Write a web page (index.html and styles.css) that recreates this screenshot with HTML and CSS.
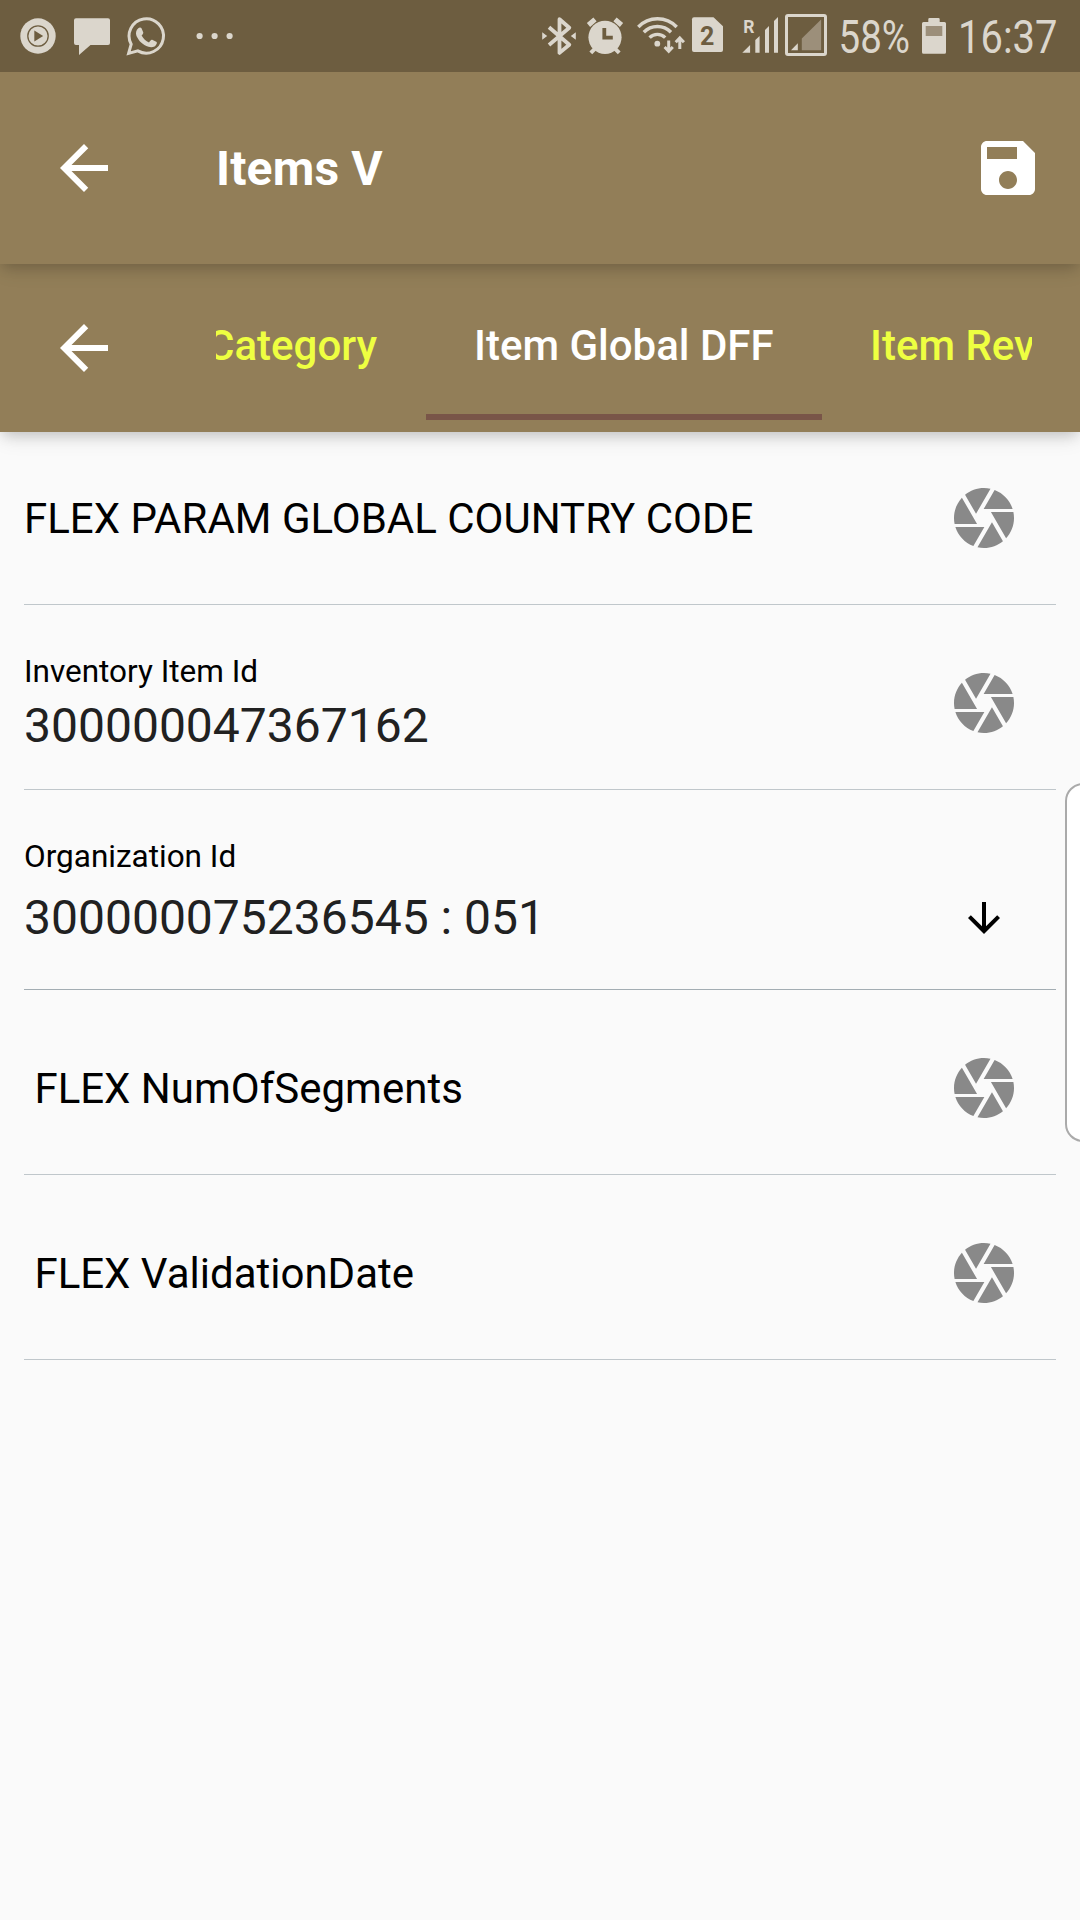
FILE: index.html
```html
<!DOCTYPE html>
<html lang="en">
<head>
<meta charset="utf-8">
<title>Items V</title>
<link rel="stylesheet" href="styles.css">
</head>
<body>
<svg class="defs" aria-hidden="true">
  <symbol id="back" viewBox="0 0 24 24"><path d="M20 11H7.83l5.59-5.59L12 4l-8 8 8 8 1.41-1.41L7.83 13H20v-2z"/></symbol>
  <symbol id="camera" viewBox="0 0 24 24"><path d="M9.4 10.5l4.77-8.26C13.47 2.09 12.75 2 12 2c-2.4 0-4.6.85-6.32 2.25l3.66 6.35.06-.1zM21.54 9c-.92-2.92-3.15-5.26-6-6.34L11.88 9h9.66zm.26 1h-7.49l.29.5 4.76 8.25C21 16.97 22 14.61 22 12c0-.69-.07-1.35-.2-2zM8.54 12l-3.9-6.75C3.01 7.03 2 9.39 2 12c0 .69.07 1.35.2 2h7.49l-1.15-2zm-6.08 3c.92 2.92 3.15 5.26 6 6.34L12.12 15H2.46zm11.27 0l-3.9 6.76c.7.15 1.42.24 2.17.24 2.4 0 4.6-.85 6.32-2.25l-3.66-6.35-.93 1.6z"/></symbol>
</svg>

<div class="status">
  <div class="status-group">
    <svg width="40" height="72" viewBox="18 0 40 72">
      <circle cx="38" cy="36" r="17.7"/>
      <circle class="cut-line" cx="38" cy="36" r="10.2"/>
      <path class="cut" d="M34.3 30.6 43.2 36l-8.9 5.4z"/>
    </svg>
    <svg width="60" height="72" viewBox="58 0 60 72">
      <path d="M76 18.3h32a2 2 0 0 1 2 2V43a2 2 0 0 1-2 2H90.500L79 55V45h-3a2 2 0 0 1-2-2V20.300a2 2 0 0 1 2-2z"/>
    </svg>
    <svg width="66" height="72" viewBox="118 0 66 72">
      <path class="line" d="M128.600 53.400l2.600-9.200a17.200 17.200 0 1 1 6.600 6.700z"/>
      <path d="M138.300 28.200c.9-1 2.600-1.100 3.200 0l1.700 4c.3.800 0 1.500-1.600 3.300 1.900 3.500 4.200 5.500 7.400 6.900 1.700-2.400 2.300-3 3.200-2.600l4 1.900c.7.400.8.900.5 2-1.100 3.500-5.200 4.200-8.200 3.100-6-2-9.600-5.700-12-10.800-1.100-3-.4-5.900 1.800-7.800z"/>
    </svg>
    <svg width="60" height="72" viewBox="184 0 60 72">
      <circle cx="199.600" cy="36" r="3.100"/><circle cx="214.600" cy="36" r="3.100"/><circle cx="229.600" cy="36" r="3.100"/>
    </svg>
  </div>
  <div class="status-group">
    <svg width="40" height="72" viewBox="540 0 40 72">
      <path class="line bt" d="M549 27.200l20.300 17.500-9.800 8.200V19.200l9.800 8.600L549 45"/>
      <path d="M542.200 32.200l5 3.800-5 3.800zM575.800 32.200l-5 3.800 5 3.800z"/>
    </svg>
    <svg width="50" height="72" viewBox="580 0 50 72">
      <circle cx="605" cy="37.300" r="16.600"/>
      <path class="line bells" d="M588.500 25l6.500-5.600M621.500 25l-6.500-5.600"/>
      <path class="line legs" d="M590.800 52.800l5-5M619.200 52.800l-5-5"/>
      <path class="cut-line hands" d="M604.300 28v9.700h8.500"/>
    </svg>
    <svg width="58" height="72" viewBox="630 0 58 72">
      <path class="line wifi" d="M638.300 27a26.500 26.500 0 0 1 38.400 0M643.800 32.300a19 19 0 0 1 27.200 0M649.600 37.600a11 11 0 0 1 15.600 0"/>
      <circle cx="657.300" cy="43.700" r="2.900"/>
      <path class="line updown" d="M668.700 40.500v10.700M664.600 47l4.100 4.300 4.100-4.300M679.800 49V38M675.700 42.200l4.100-4.300 4.100 4.300"/>
    </svg>
    <svg width="48" height="72" viewBox="688 0 48 72">
      <path d="M694 17.300h19.500l9.500 9V50a2 2 0 0 1-2 2h-27a2 2 0 0 1-2-2V19.300a2 2 0 0 1 2-2z"/>
      <text class="sim" x="700" y="45">2</text>
    </svg>
    <svg width="46" height="72" viewBox="736 0 46 72">
      <text class="roam" x="743.300" y="32.800">R</text>
      <path d="M742.300 52.800h7.800V45zM755.300 52.800V40l4.300-4v16.800zM765 52.800V30l4-4v26.800zM774 52.800V21l4-4v35.800z"/>
    </svg>
    <svg width="50" height="72" viewBox="782 0 50 72">
      <rect class="line" x="786.500" y="15.500" width="39" height="39" rx="1.500"/>
      <path d="M791 50.200h6.800v-6.900z"/>
      <path class="faint" d="M801.800 50.200V38.500l19.300-19v30.700z"/>
    </svg>
    <svg width="80" height="72" viewBox="832 0 80 72">
      <text class="clock" x="838.500" y="53.300" textLength="71.500" lengthAdjust="spacingAndGlyphs">58%</text>
    </svg>
    <svg width="44" height="72" viewBox="912 0 44 72">
      <path d="M929.500 18h9a1.200 1.200 0 0 1 1.200 1.200V22h4.800a1.500 1.500 0 0 1 1.500 1.500v28.800a1.500 1.500 0 0 1-1.500 1.500h-21a1.500 1.500 0 0 1-1.500-1.500V23.500a1.500 1.500 0 0 1 1.500-1.500h4.800v-2.800a1.200 1.200 0 0 1 1.200-1.200z"/>
      <path class="faint" d="M925.700 26h16.600v10h-16.600z"/>
    </svg>
    <svg width="124" height="72" viewBox="956 0 124 72">
      <text class="clock" x="958" y="53.300" textLength="99.500" lengthAdjust="spacingAndGlyphs">16:37</text>
    </svg>
  </div>
</div>

<header class="appbar">
  <svg class="icon"><use href="#back"/></svg>
  <h1 class="title">Items V</h1>
  <svg class="icon" viewBox="0 0 24 24"><path d="M17 3H5c-1.110 0-2 .9-2 2v14c0 1.100.89 2 2 2h14c1.100 0 2-.9 2-2V7l-4-4zm-2 6H5V5h10v4zm-3 10c-1.660 0-3-1.340-3-3s1.340-3 3-3 3 1.340 3 3-1.340 3-3 3z"/></svg>
</header>

<nav class="tabbar">
  <svg class="icon"><use href="#back"/></svg>
  <div class="tabs">
    <div class="tab tab-first">Category</div>
    <div class="tab active">Item Global DFF</div>
    <div class="tab tab-last">Item Rev</div>
  </div>
</nav>

<main class="form">
  <div class="row">
    <div class="label-only">FLEX PARAM GLOBAL COUNTRY CODE</div>
    <svg class="icon camera"><use href="#camera"/></svg>
  </div>
  <div class="row">
    <div class="field"><div class="label">Inventory Item Id</div><div class="value">300000047367162</div></div>
    <svg class="icon camera"><use href="#camera"/></svg>
  </div>
  <div class="row select">
    <div class="field"><div class="label">Organization Id</div><div class="value">300000075236545 : 051</div></div>
    <svg class="icon arrow" viewBox="0 0 24 24"><path d="M20 12l-1.410-1.410L13 16.170V4h-2v12.170l-5.580-5.590L4 12l8 8 8-8z"/></svg>
  </div>
  <div class="row">
    <div class="label-only"> FLEX NumOfSegments</div>
    <svg class="icon camera"><use href="#camera"/></svg>
  </div>
  <div class="row">
    <div class="label-only"> FLEX ValidationDate</div>
    <svg class="icon camera"><use href="#camera"/></svg>
  </div>
</main>
<div class="edge-handle"></div>
</body>
</html>
```
FILE: styles.css
```css
* { box-sizing: border-box; }
body {
  margin: 0;
  width: 1080px;
  height: 1920px;
  position: relative;
  overflow: hidden;
  display: flex;
  flex-direction: column;
  background: #fafafa;
  color: #000;
  font-family: Roboto, "Liberation Sans", sans-serif;
}
svg { display: block; flex: none; }
.defs { display: none; }

/* status bar */
.status {
  display: flex;
  justify-content: space-between;
  height: 72px;
  padding-left: 18px;
  background: #6d5d40;
  position: relative;
  z-index: 3;
}
.status-group { display: flex; fill: #dbd6cc; }
.status-group svg { overflow: visible; }
.line { fill: none; stroke: #dbd6cc; stroke-width: 3; }
.cut { fill: #6d5d40; }
.cut-line { fill: none; stroke: #6d5d40; stroke-width: 1.3; }
.faint { fill: #9c8f7a; }
.bt { stroke-width: 3.8; stroke-linejoin: round; }
.bells { stroke-width: 5; }
.legs { stroke-width: 4; }
.hands { stroke-width: 3.8; }
.wifi { stroke-width: 3.4; }
.updown { stroke-width: 3; }
.sim { font-size: 25px; font-weight: 700; fill: #6d5d40; }
.roam { font-size: 17.5px; font-weight: 700; }
.clock { font-size: 46px; }

/* bars */
.appbar, .tabbar {
  display: flex;
  align-items: center;
  padding: 0 36px 0 48px;
  background: #927e58;
  color: #fff;
  fill: #fff;
  position: relative;
  box-shadow: 0 6px 12px -3px rgba(0,0,0,.13), 0 6px 20px -2px rgba(0,0,0,.14);
}
.appbar { height: 192px; z-index: 2; }
.tabbar { height: 168px; z-index: 1; padding-right: 48px; }
.icon { width: 72px; height: 72px; }
.title {
  flex: 1;
  margin: 2px 0 0 96px;
  font-size: 48px;
  line-height: 56px;
  font-weight: 700;
  letter-spacing: .15px;
}
.tabs {
  flex: 1;
  display: flex;
  height: 144px;
  margin-left: 96px;
  overflow: hidden;
  font-size: 42px;
  font-weight: 500;
  color: #eeff41;
}
.tab {
  flex: none;
  padding: 0 48px;
  line-height: 140px;
  height: 144px;
  border-bottom: 6px solid transparent;
  white-space: nowrap;
}
.tab-first { width: 210px; padding: 0 49px 0 0; display: flex; justify-content: flex-end; }
.active { width: 396px; color: #fff; border-color: #795548; }

/* form */
.form { padding: 0 24px; }
.row {
  display: flex;
  align-items: center;
  justify-content: space-between;
  height: 185px;
  padding: 12px 36px 0 0;
  border-bottom: 1px solid #c0c7cb;
}
.row:first-child { height: 173px; padding-top: 0; }
.row.select { height: 200px; border-color: #a3adb3; padding-top: 4px; }
.camera { fill: #898989; }
.label-only { font-size: 42px; line-height: 50px; padding-top: 2px; white-space: pre; }
.field { display: flex; flex-direction: column; }
.label { font-size: 31.500px; line-height: 38px; }
.value { font-size: 48px; line-height: 56px; margin: 7px 0 -1px; color: #212121; }
.select .value { margin: 14px 0 0; }
.select .arrow { width: 48px; height: 48px; margin-right: 12px; margin-top: 52px; }

/* system edge panel handle */
.edge-handle {
  position: absolute;
  left: 1065px;
  top: 783px;
  width: 24px;
  height: 359px;
  background: #fff;
  border: 2px solid #aaa;
  border-radius: 18px 0 0 18px;
}
```
